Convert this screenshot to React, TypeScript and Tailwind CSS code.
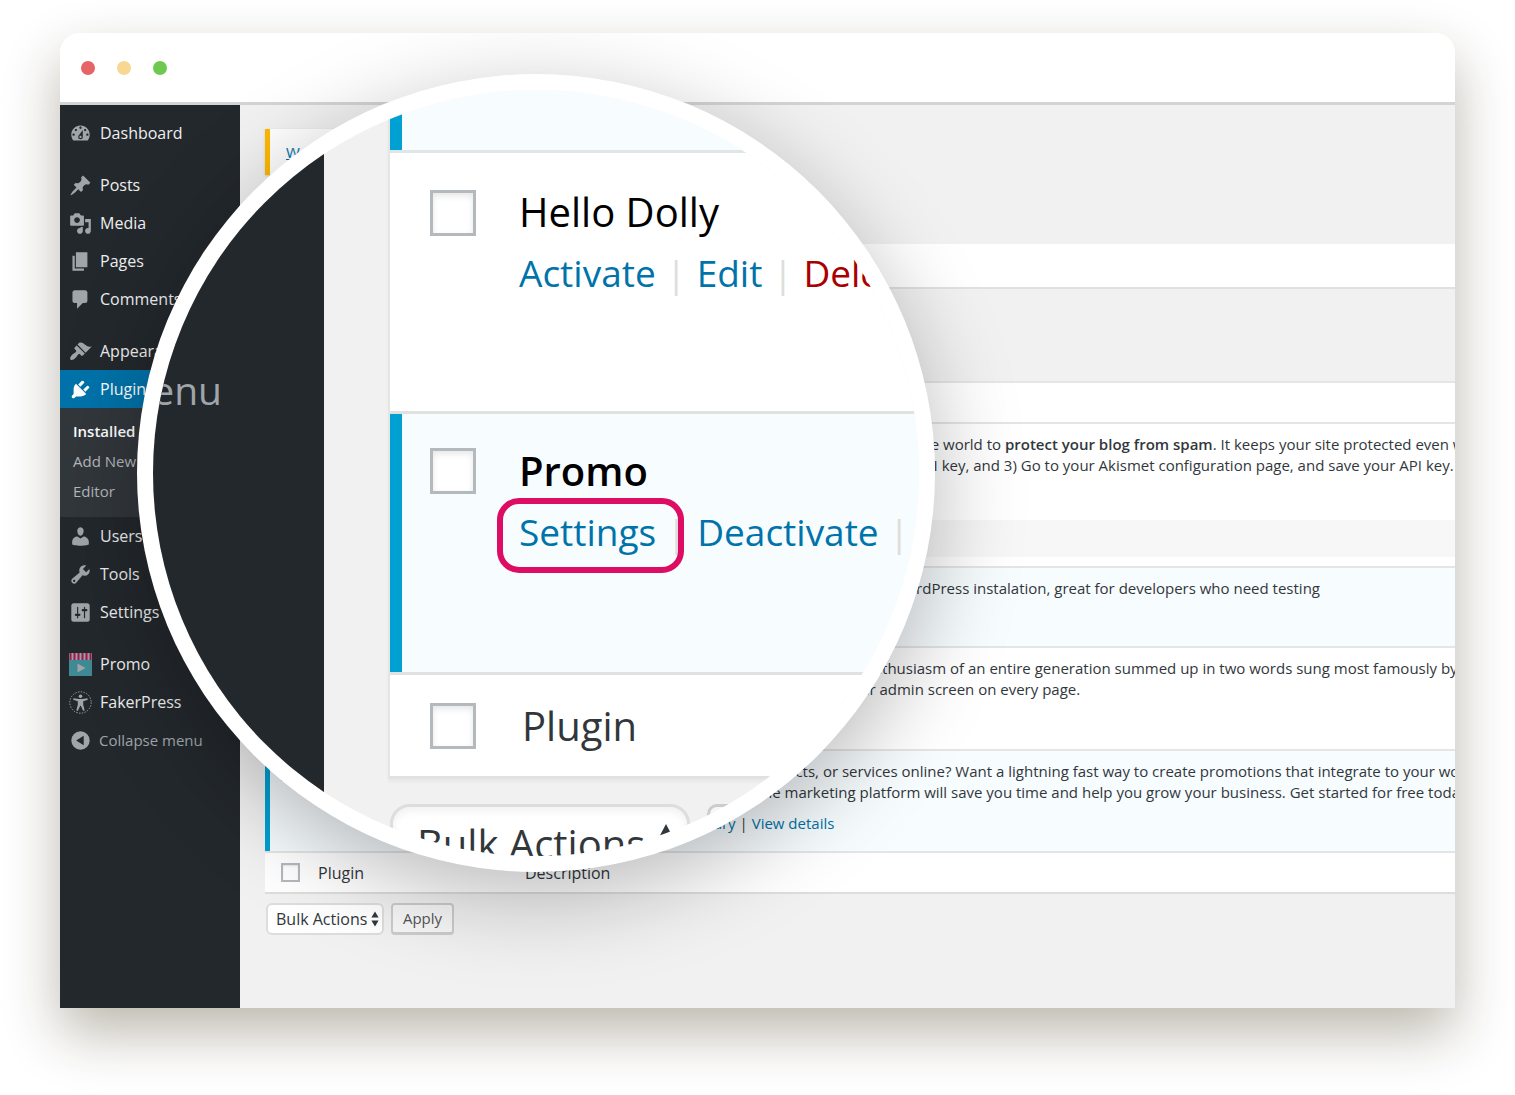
import React from "react";

type IconProps = { d: string };

function Glyph({ d }: IconProps) {
  return (
    <svg viewBox="0 0 20 20" className="size-[23px] shrink-0" fill="currentColor" fillRule="evenodd" aria-hidden="true">
      <path d={d} />
    </svg>
  );
}

const paths = {
  dashboard:
    "M3.76 16h12.48c1.1-1.37 1.76-3.11 1.76-5 0-4.42-3.58-8-8-8s-8 3.58-8 8c0 1.89.66 3.63 1.76 5zM10 4c.55 0 1 .45 1 1s-.45 1-1 1-1-.45-1-1 .45-1 1-1zM6 6c.55 0 1 .45 1 1s-.45 1-1 1-1-.45-1-1 .45-1 1-1zm8 0c.55 0 1 .45 1 1s-.45 1-1 1-1-.45-1-1 .45-1 1-1zm-5.37 5.55L12 7v6c0 1.1-.9 2-2 2s-2-.9-2-2c0-.57.24-1.08.63-1.45zM4 10c.55 0 1 .45 1 1s-.45 1-1 1-1-.45-1-1 .45-1 1-1zm12 0c.55 0 1 .45 1 1s-.45 1-1 1-1-.45-1-1 .45-1 1-1zm-5 3c0-.55-.45-1-1-1s-1 .45-1 1 .45 1 1 1 1-.45 1-1z",
  posts:
    "M10.44 3.02l1.82-1.82 6.36 6.35-1.83 1.82c-1.05-.68-2.48-.57-3.41.36l-.75.75c-.92.93-1.04 2.35-.35 3.41l-1.83 1.82-2.41-2.41-2.8 2.79c-.42.42-3.38 2.71-3.8 2.29s1.86-3.39 2.28-3.81l2.79-2.79L4.1 9.36l1.83-1.82c1.05.69 2.48.57 3.4-.36l.75-.75c.93-.92 1.05-2.35.36-3.41z",
  media:
    "M13 11V4c0-.55-.45-1-1-1h-1.67L9 1H5L3.67 3H2c-.55 0-1 .45-1 1v7c0 .55.45 1 1 1h10c.55 0 1-.45 1-1zM7 4.5c1.38 0 2.5 1.12 2.5 2.5S8.38 9.5 7 9.5 4.5 8.38 4.5 7 5.62 4.5 7 4.5zM14 6h5v10.5c0 1.38-1.12 2.5-2.5 2.5S14 17.88 14 16.5s1.12-2.5 2.5-2.5c.17 0 .34.02.5.05V9h-3V6zm-4 8.05V13h2v3.5c0 1.38-1.12 2.5-2.5 2.5S7 17.88 7 16.5 8.12 14 9.5 14c.17 0 .34.02.5.05z",
  pages: "M6 15V2h10v13H6zm-1 1h8v2H3V5h2v11z",
  comments: "M5 2h9c1.1 0 2 .9 2 2v7c0 1.1-.9 2-2 2h-2l-5 5v-5H5c-1.1 0-2-.9-2-2V4c0-1.1.9-2 2-2z",
  appearance:
    "M14.48 11.06L7.41 3.99l1.5-1.5c.5-.56 2.3-.47 3.51.32 1.21.8 1.43 1.28 2.91 2.1 1.18.64 2.45 1.26 4.45.85zm-.71.71L6.7 4.7 4.93 6.47c-.39.39-.39 1.02 0 1.41l1.06 1.06c.39.39.39 1.03 0 1.42-.6.6-1.43 1.11-2.21 1.69-.35.26-.7.53-1.01.84C1.43 14.23.4 16.08 1.4 17.07c.99 1 2.84-.03 4.18-1.36.31-.31.58-.66.85-1.02.57-.78 1.08-1.61 1.69-2.21.39-.39 1.02-.39 1.41 0l1.06 1.06c.39.39 1.02.39 1.41 0z",
  plugins:
    "M13.11 4.36L9.87 7.6 8 5.73l3.24-3.24c.35-.34 1.05-.2 1.56.32.52.51.66 1.21.31 1.55zm-8 1.77l.91-1.12 9.01 9.01-1.19.84c-.71.71-2.63 1.16-3.82 1.16H6.14L4.9 17.26c-.59.59-1.54.59-2.12 0-.59-.58-.59-1.53 0-2.12l1.24-1.24v-3.88c0-1.13.4-3.19 1.09-3.89zm7.26 3.97l3.24-3.24c.34-.35 1.04-.21 1.55.31.52.51.66 1.21.31 1.55l-3.24 3.25z",
  users:
    "M10 9.25c-2.27 0-2.73-3.44-2.73-3.44C7 4.02 7.82 2 9.97 2c2.16 0 2.98 2.02 2.71 3.81 0 0-.41 3.44-2.68 3.44zm0 2.57L12.72 10c2.39 0 4.52 2.33 4.52 4.53v2.49s-3.65 1.13-7.24 1.13c-3.65 0-7.24-1.13-7.24-1.13v-2.49c0-2.25 1.94-4.48 4.47-4.48z",
  tools:
    "M16.68 9.77c-1.34 1.34-3.3 1.67-4.95.99l-5.41 6.52c-.99.99-2.59.99-3.58 0s-.99-2.59 0-3.57l6.52-5.42c-.68-1.65-.35-3.61.99-4.95 1.28-1.28 3.12-1.62 4.72-1.06l-2.89 2.89 2.82 2.82 2.86-2.87c.53 1.58.18 3.39-1.08 4.65zM3.81 16.21c.4.39 1.04.39 1.43 0 .4-.4.4-1.04 0-1.43-.39-.4-1.03-.4-1.43 0-.39.39-.39 1.03 0 1.43z",
  settings:
    "M18 16V4c0-1.1-.9-2-2-2H4c-1.1 0-2 .9-2 2v12c0 1.1.9 2 2 2h12c1.1 0 2-.9 2-2zM8 11h1c.55 0 1 .45 1 1s-.45 1-1 1H8v1.5c0 .28-.22.5-.5.5s-.5-.22-.5-.5V13H6c-.55 0-1-.45-1-1s.45-1 1-1h1V5.5c0-.28.22-.5.5-.5s.5.22.5.5V11zm5-2h-1c-.55 0-1-.45-1-1s.45-1 1-1h1V5.5c0-.28.22-.5.5-.5s.5.22.5.5V7h1c.55 0 1 .45 1 1s-.45 1-1 1h-1v5.5c0 .28-.22.5-.5.5s-.5-.22-.5-.5V9z",
  collapse: "M10 2a8 8 0 1 0 0 16 8 8 0 0 0 0-16zM12.8 5.8v8.4L6.2 10z",
};

function PromoIcon() {
  return (
    <svg viewBox="0 0 23 23" className="size-[23px] shrink-0" aria-hidden="true">
      <rect y="7" width="23" height="16" fill="#3f8a94" />
      <rect width="23" height="7" fill="#9c9fa3" />
      {[0, 4, 8, 12, 16, 20].map((x) => (
        <rect key={x} x={x + 0.5} width="2" height="7" fill="#9e1750" />
      ))}
      <path d="M8.5 10.5v9l8-4.5z" fill="#a0a5aa" />
    </svg>
  );
}

function FakerIcon() {
  return (
    <svg viewBox="0 0 23 23" className="size-[23px] shrink-0" aria-hidden="true">
      <circle cx="11.5" cy="11.5" r="10.7" fill="none" stroke="#a0a5aa" strokeDasharray="1.4 1.4" />
      <circle cx="11.5" cy="5.2" r="1.8" fill="#a0a5aa" />
      <path d="M4.5 7.2l5 .9h4l5-.9.3 1.5-4.6 1.6v3.5l1.5 5.6-1.6.4-2.3-5h-.6l-2.3 5-1.6-.4 1.5-5.6v-3.5L4.2 8.7z" fill="#a0a5aa" />
    </svg>
  );
}

function MenuItem({ icon, label, active = false }: { icon: React.ReactNode; label: string; active?: boolean }) {
  return (
    <a
      href="#"
      className={
        active
          ? "flex h-[38px] items-center gap-2 bg-[#0073aa] pl-[9px] text-white"
          : "flex h-[38px] items-center gap-2 pl-[9px] text-[#a0a5aa]"
      }
    >
      {icon}
      <span className={active ? "text-white" : "text-[#eee]"}>{label}</span>
    </a>
  );
}

function Sidebar() {
  return (
    <nav aria-label="Admin menu" className="w-[180px] shrink-0 bg-[#23282d] pt-[9px] text-base">
      <MenuItem icon={<Glyph d={paths.dashboard} />} label="Dashboard" />
      <div className="mt-[14px]">
        <MenuItem icon={<Glyph d={paths.posts} />} label="Posts" />
        <MenuItem icon={<Glyph d={paths.media} />} label="Media" />
        <MenuItem icon={<Glyph d={paths.pages} />} label="Pages" />
        <MenuItem icon={<Glyph d={paths.comments} />} label="Comments" />
      </div>
      <div className="mt-[14px]">
        <MenuItem icon={<Glyph d={paths.appearance} />} label="Appearance" />
        <MenuItem active icon={<Glyph d={paths.plugins} />} label="Plugins" />
        <div className="flex flex-col bg-[#32373c] pt-2 pb-[11px] pl-[13px] text-[15px] leading-[30px] text-[#b4b9be]">
          <a href="#" className="font-semibold text-white">Installed</a>
          <a href="#">Add New</a>
          <a href="#">Editor</a>
        </div>
        <MenuItem icon={<Glyph d={paths.users} />} label="Users" />
        <MenuItem icon={<Glyph d={paths.tools} />} label="Tools" />
        <MenuItem icon={<Glyph d={paths.settings} />} label="Settings" />
      </div>
      <div className="mt-[14px]">
        <MenuItem icon={<PromoIcon />} label="Promo" />
        <MenuItem icon={<FakerIcon />} label="FakerPress" />
        <button type="button" className="flex h-[38px] items-center gap-[7px] pl-[9px] text-[15px] text-[#a0a5aa]">
          <Glyph d={paths.collapse} />
          Collapse menu
        </button>
      </div>
    </nav>
  );
}

function Check({ label }: { label: string }) {
  return (
    <input
      type="checkbox"
      aria-label={label}
      className="block size-[19px] appearance-none border-2 border-[#b4b9be] bg-white shadow-[inset_0_1px_2px_rgba(0,0,0,0.1)]"
    />
  );
}

function Row({
  name,
  actions,
  active = false,
  height,
  children,
}: {
  name: string;
  actions: string[];
  active?: boolean;
  height: string;
  children: React.ReactNode;
}) {
  return (
    <tr className={`${height} border-t-2 border-[#e5e5e5] align-top ${active ? "bg-[#f7fcfe]" : "bg-white"}`}>
      <td className={active ? "py-[11px] pl-4 shadow-[inset_5px_0_0_#00a0d2]" : "py-[11px] pl-4"}>
        <Check label={`Select ${name}`} />
      </td>
      <td className="py-[10px]">
        <strong className={active ? "font-semibold" : "font-normal"}>{name}</strong>
        <p className="flex gap-2 text-[#0073aa]">
          {actions.map((a) => (
            <a key={a} href="#">{a}</a>
          ))}
        </p>
      </td>
      <td className="py-[10px] leading-[21px] whitespace-nowrap">{children}</td>
    </tr>
  );
}

function HeadCells({ id }: { id: string }) {
  return (
    <>
      <th className="pl-4"><Check label={`Select all ${id}`} /></th>
      <th className="text-left font-normal">Plugin</th>
      <th className="text-left font-normal">Description</th>
    </>
  );
}

function PluginTable() {
  return (
    <table className="w-full table-fixed border-y-2 border-t-[#e5e5e5] border-b-[#ddd] bg-white text-[15px] text-[#32373c]">
      <colgroup>
        <col className="w-[53px]" />
        <col className="w-[207px]" />
        <col />
      </colgroup>
      <thead>
        <tr className="h-[41px] text-base"><HeadCells id="top" /></tr>
      </thead>
      <tbody>
        <Row name="Akismet" actions={["Activate", "Edit", "Delete"]} height="h-[97px]">
          <p>
            Used by many, Akismet is quite possibly the best way in the world to{" "}
            <strong className="font-semibold">protect your blog from spam</strong>. It keeps your site protected even while you sleep.
          </p>
          <p>link to the left of this description, 2) Sign up for Akismet API key, and 3) Go to your Akismet configuration page, and save your API key.</p>
        </Row>
        <tr className="h-[47px]">
          <td colSpan={3} className="p-0 pb-[9px]">
            <div className="flex h-[37px] items-center bg-[#f7f7f7] pl-4">There is a new version of Akismet available.</div>
          </td>
        </tr>
        <Row active name="FakerPress" actions={["Deactivate", "Edit"]} height="h-[80px]">
          <p>FakerPress is a clean way to create fake data to your WordPress instalation, great for developers who need testing</p>
        </Row>
        <Row name="Hello Dolly" actions={["Activate", "Edit", "Delete"]} height="h-[103px]">
          <p>It is not just a plugin, it symbolizes the hope and enthusiasm of an entire generation summed up in two words sung most famously by</p>
          <p>a verse from Hello, Dolly in the upper right of your admin screen on every page.</p>
        </Row>
        <Row active name="Promo" actions={["Settings", "Deactivate"]} height="h-[102px]">
          <p>Do you promote all your events, products, or services online? Want a lightning fast way to create promotions that integrate to your wordpress</p>
          <p>site? Our all in one automatic mobile marketing platform will save you time and help you grow your business. Get started for free today.</p>
          <p className="mt-[10px]">
            Version 1.0 | By Promo <a href="#" className="text-[#0073aa]">library</a> |{" "}
            <a href="#" className="text-[#0073aa]">View details</a>
          </p>
        </Row>
      </tbody>
      <tfoot>
        <tr className="h-[41px] border-t-2 border-[#e5e5e5] text-base"><HeadCells id="bottom" /></tr>
      </tfoot>
    </table>
  );
}

function BigCheck({ label }: { label: string }) {
  return (
    <input
      type="checkbox"
      aria-label={label}
      className="size-[46px] shrink-0 appearance-none border-[3px] border-[#b4b9be] bg-white shadow-[inset_0_3px_6px_rgba(0,0,0,0.1)]"
    />
  );
}

function Bar() {
  return <span className="w-[41px] text-center text-[#ddd]">|</span>;
}

function Lens() {
  return (
    <section
      aria-label="Magnified plugin list"
      className="absolute top-[41px] left-[77px] size-[798px] rounded-full bg-white p-4 shadow-[0_24px_90px_rgba(0,0,0,0.28)]"
    >
      <div className="flex size-full overflow-hidden rounded-full bg-[#f1f1f1]">
        <div className="flex w-[171px] shrink-0 justify-end bg-[#23282d] pt-[274px] pr-[102px] text-[39px] leading-[52px] text-[#a0a5aa]">
          menu
        </div>
        <div className="ml-[64px] w-[560px] shrink-0 text-[40px] leading-[60px]">
          <div className="border-l-2 border-[#e5e5e5] bg-white shadow-[0_3px_3px_rgba(0,0,0,0.04)]">
            <div className="h-[63px] border-b-[3px] border-[#dfe5e8] bg-[#f7fcfe] shadow-[inset_12px_0_0_#00a0d2]" />
            <div className="flex h-[261px] gap-[43px] border-b-[3px] border-[#e1e1e1] pt-[37px] pl-10">
              <BigCheck label="Select Hello Dolly, magnified" />
              <div className="-mt-2">
                <p className="text-black">Hello Dolly</p>
                <p className="flex text-[37px] leading-[62px] text-[#0073aa]">
                  <a href="#">Activate</a>
                  <Bar />
                  <a href="#">Edit</a>
                  <Bar />
                  <a href="#" className="text-[#a00]">Delete</a>
                </p>
              </div>
            </div>
            <div className="flex h-[261px] gap-[43px] border-b-[3px] border-[#e1e1e1] bg-[#f7fcfe] pt-[34px] pl-10 shadow-[inset_12px_0_0_#00a0d2]">
              <BigCheck label="Select Promo, magnified" />
              <div className="-mt-[7px]">
                <p className="font-semibold text-black">Promo</p>
                <p className="flex text-[37px] leading-[62px] text-[#0073aa]">
                  <a href="#" className="relative">
                    Settings
                    <span className="absolute -top-[3px] -left-[22px] h-[75px] w-[187px] rounded-[22px] border-[6px] border-[#dc0d62]" />
                  </a>
                  <Bar />
                  <a href="#">Deactivate</a>
                  <Bar />
                </p>
              </div>
            </div>
            <div className="flex h-[104px] items-center gap-[46px] border-b-[3px] border-[#e1e1e1] pl-10 text-[#32373c]">
              <BigCheck label="Select all, magnified" />
              <span>Plugin</span>
            </div>
          </div>
          <div className="mt-[25px] flex gap-[17px] pl-[2px]">
            <div className="relative w-[300px] shrink-0">
              <select
                aria-label="Bulk action, magnified"
                className="h-[80px] w-full appearance-none rounded-[20px] border-[3px] border-[#ddd] bg-white pl-6 text-[#32373c] shadow-[inset_0_4px_8px_rgba(0,0,0,0.06)]"
              >
                <option>Bulk Actions</option>
              </select>
              <svg viewBox="0 0 20 44" className="pointer-events-none absolute top-[18px] right-[14px] h-11 w-5" fill="#32373c" aria-hidden="true">
                <path d="M10 2l9 17H1zM10 42L1 25h18z" />
              </svg>
            </div>
            <button type="button" className="h-[80px] w-[156px] rounded-[10px] border-[3px] border-[#ccc] bg-[#f7f7f7] text-[#555]">Apply</button>
          </div>
        </div>
      </div>
    </section>
  );
}

export default function App() {
  return (
    <div className="flex min-h-screen flex-col bg-white px-[60px] pt-[33px] pb-[87px] font-['Open_Sans',sans-serif]">
      <div className="flex flex-1 rounded-t-[20px] shadow-[0_25px_56px_rgba(48,34,0,0.32)]">
        <div className="relative flex min-w-0 flex-1 flex-col overflow-hidden rounded-t-[20px] bg-white">
          <header className="flex h-[72px] items-center gap-[22px] border-b-[3px] border-[#d4d4d4] px-[21px] pt-px">
            <span className="size-[14px] rounded-full bg-[#e66465]" />
            <span className="size-[14px] rounded-full bg-[#f8d792]" />
            <span className="size-[14px] rounded-full bg-[#6fc950]" />
          </header>
          <div className="flex flex-1">
            <Sidebar />
            <main className="min-w-0 flex-1 overflow-hidden bg-[#f1f1f1] pt-6 pl-[25px]">
              <div className="flex h-[46px] w-[400px] items-center border-l-[5px] border-[#ffb900] bg-white pl-4 text-[15px] shadow-sm">
                <a href="#" className="text-[#0073aa] underline">Welcome to your plugins</a>
              </div>
              <div className="mt-[69px] h-[45px] border-b-2 border-[#e0e0e0] bg-white" />
              <div className="mt-[92px]">
                <PluginTable />
              </div>
              <div className="mt-[9px] flex gap-[7px] pl-px">
                <div className="relative w-[118px]">
                  <select
                    aria-label="Bulk action"
                    className="h-8 w-full appearance-none rounded-md border-2 border-[#ddd] bg-white pl-2 text-base text-[#32373c]"
                  >
                    <option>Bulk Actions</option>
                  </select>
                  <svg viewBox="0 0 8 16" className="pointer-events-none absolute top-2 right-[5px] h-4 w-2" fill="#32373c" aria-hidden="true">
                    <path d="M4 .5l3.600 6H.4zM4 15.500L.4 9.500h7.200z" />
                  </svg>
                </div>
                <button type="button" className="h-8 w-[63px] rounded border-2 border-b-[3px] border-[#ccc] bg-[#f7f7f7] text-[15px] text-[#555]">
                  Apply
                </button>
              </div>
            </main>
          </div>
          <Lens />
        </div>
      </div>
    </div>
  );
}
